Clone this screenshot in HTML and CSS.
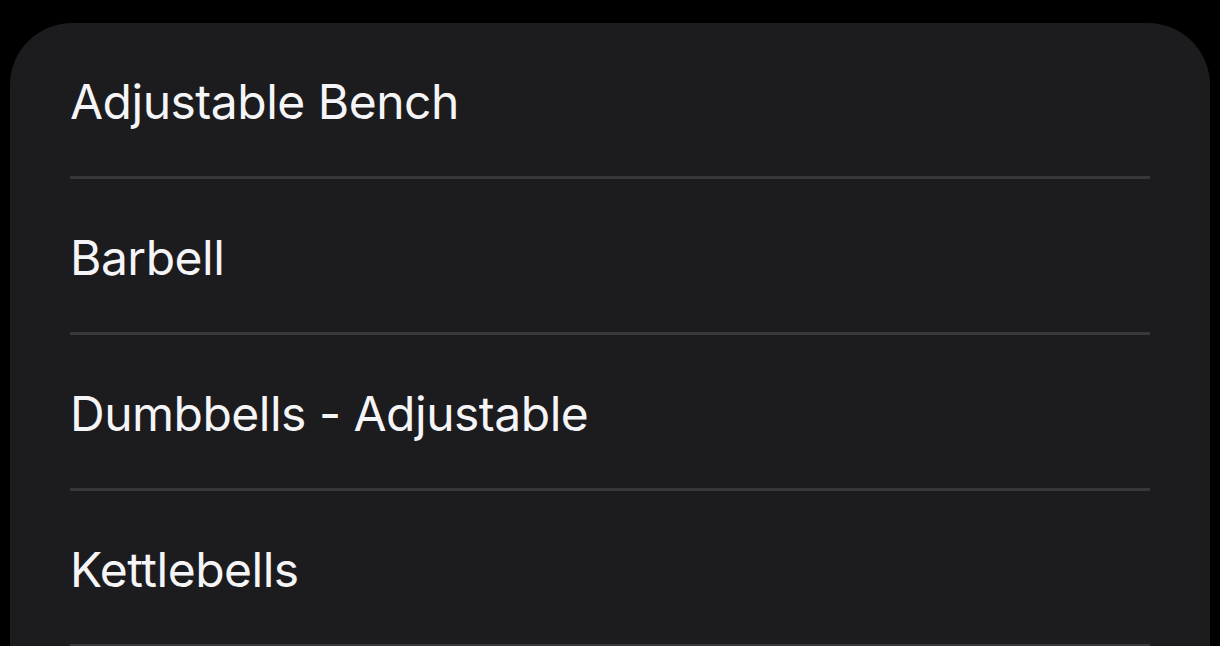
FILE: index.html
```html
<!DOCTYPE html>
<html lang="en">
<head>
    <meta charset="UTF-8">
    <meta name="viewport" content="width=device-width, initial-scale=1.0">
    <title>Equipment</title>
    <link rel="stylesheet" href="styles.css">
</head>
<body>
    <div class="card">
        <ul class="equipment-list">
            <li class="item">Adjustable Bench</li>
            <li class="item">Barbell</li>
            <li class="item">Dumbbells - Adjustable</li>
            <li class="item">Kettlebells</li>
        </ul>
    </div>
</body>
</html>
```

FILE: styles.css
```css
* {
    margin: 0;
    padding: 0;
    box-sizing: border-box;
}

html, body {
    height: 100%;
    overflow: hidden;
}

body {
    font-family: Inter, "Noto Sans", sans-serif;
    background-color: #000000;
    color: #f5f5f7;
    padding: 23px 10px 0 10px;
}

.card {
    background-color: #1c1c1e;
    border-radius: 62px 62px 0 0;
    padding-left: 60px;
    height: 100%;
    overflow: hidden;
}

.equipment-list {
    list-style: none;
    margin-right: 60px;
}

.item {
    height: 156px;
    display: flex;
    align-items: center;
    padding-top: 3px;
    font-size: 48px;
    letter-spacing: -0.5px;
    border-bottom: 3px solid #38383a;
}
```
